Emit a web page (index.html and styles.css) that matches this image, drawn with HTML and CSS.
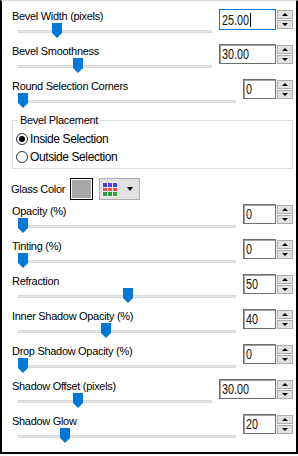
FILE: index.html
```html
<!DOCTYPE html>
<html lang="en">
<head>
    <meta charset="UTF-8">
    <meta name="viewport" content="width=device-width, initial-scale=1.0">
    <title>Glass Settings</title>
    <link rel="stylesheet" href="styles.css">
</head>
<body>
    <div class="panel">
        <div class="row">
            <div class="label">Bevel Width (pixels)</div>
            <div class="slider"><div class="track"></div><div class="thumb" style="left: 34px"></div></div>
            <div class="spin">
                <div class="box wide focused"><span class="num">25.00</span><span class="caret"></span></div>
                <div class="arrows"><div class="btn up"></div><div class="btn down"></div></div>
            </div>
        </div>
        <div class="row">
            <div class="label">Bevel Smoothness</div>
            <div class="slider"><div class="track"></div><div class="thumb" style="left: 55px"></div></div>
            <div class="spin">
                <div class="box wide"><span class="num">30.00</span></div>
                <div class="arrows"><div class="btn up"></div><div class="btn down"></div></div>
            </div>
        </div>
        <div class="row">
            <div class="label">Round Selection Corners</div>
            <div class="slider"><div class="track"></div><div class="thumb" style="left: 0px"></div></div>
            <div class="spin">
                <div class="box"><span class="num">0</span></div>
                <div class="arrows"><div class="btn up"></div><div class="btn down"></div></div>
            </div>
        </div>

        <fieldset class="group">
            <legend>Bevel Placement</legend>
            <div class="option"><span class="radio checked"></span>Inside Selection</div>
            <div class="option"><span class="radio"></span>Outside Selection</div>
        </fieldset>

        <div class="color-row">
            <span class="color-label">Glass Color</span>
            <span class="swatch"><span class="swatch-fill"></span></span>
            <span class="picker">
                <svg width="16" height="15" viewBox="0 0 16 15">
                    <rect x="0" y="0" width="16" height="15" fill="#f4f4f4"/>
                    <rect x="1" y="1" width="4" height="4" fill="#3b3bf0"/>
                    <rect x="6" y="1" width="4" height="4" fill="#5a3ee8"/>
                    <rect x="11" y="1" width="4" height="4" fill="#3b3bf0"/>
                    <rect x="1" y="6" width="4" height="3" fill="#f04848"/>
                    <rect x="6" y="6" width="4" height="3" fill="#e85070"/>
                    <rect x="11" y="6" width="4" height="3" fill="#f04848"/>
                    <rect x="1" y="10" width="4" height="4" fill="#2e9e3a"/>
                    <rect x="6" y="10" width="4" height="4" fill="#2e9e3a"/>
                    <rect x="11" y="10" width="4" height="4" fill="#2e9e3a"/>
                </svg>
                <span class="drop"></span>
            </span>
        </div>

        <div class="row">
            <div class="label">Opacity (%)</div>
            <div class="slider"><div class="track"></div><div class="thumb" style="left: 0px"></div></div>
            <div class="spin">
                <div class="box"><span class="num">0</span></div>
                <div class="arrows"><div class="btn up"></div><div class="btn down"></div></div>
            </div>
        </div>
        <div class="row">
            <div class="label">Tinting (%)</div>
            <div class="slider"><div class="track"></div><div class="thumb" style="left: 0px"></div></div>
            <div class="spin">
                <div class="box"><span class="num">0</span></div>
                <div class="arrows"><div class="btn up"></div><div class="btn down"></div></div>
            </div>
        </div>
        <div class="row">
            <div class="label">Refraction</div>
            <div class="slider"><div class="track"></div><div class="thumb" style="left: 105px"></div></div>
            <div class="spin">
                <div class="box"><span class="num">50</span></div>
                <div class="arrows"><div class="btn up"></div><div class="btn down"></div></div>
            </div>
        </div>
        <div class="row">
            <div class="label">Inner Shadow Opacity (%)</div>
            <div class="slider"><div class="track"></div><div class="thumb" style="left: 83px"></div></div>
            <div class="spin">
                <div class="box"><span class="num">40</span></div>
                <div class="arrows"><div class="btn up"></div><div class="btn down"></div></div>
            </div>
        </div>
        <div class="row">
            <div class="label">Drop Shadow Opacity (%)</div>
            <div class="slider"><div class="track"></div><div class="thumb" style="left: 0px"></div></div>
            <div class="spin">
                <div class="box"><span class="num">0</span></div>
                <div class="arrows"><div class="btn up"></div><div class="btn down"></div></div>
            </div>
        </div>
        <div class="row">
            <div class="label">Shadow Offset (pixels)</div>
            <div class="slider"><div class="track"></div><div class="thumb" style="left: 55px"></div></div>
            <div class="spin">
                <div class="box wide"><span class="num">30.00</span></div>
                <div class="arrows"><div class="btn up"></div><div class="btn down"></div></div>
            </div>
        </div>
        <div class="row">
            <div class="label">Shadow Glow</div>
            <div class="slider"><div class="track"></div><div class="thumb" style="left: 42px"></div></div>
            <div class="spin">
                <div class="box"><span class="num">20</span></div>
                <div class="arrows"><div class="btn up"></div><div class="btn down"></div></div>
            </div>
        </div>
    </div>
</body>
</html>
```

FILE: styles.css
```css
/* Page */
body {
    margin: 0;
    background-color: #fff;
    font-family: "Liberation Sans", Arial, sans-serif;
    font-size: 11px;
    color: #000;
}

/* Dialog frame */
.panel {
    width: 298px;
    height: 454px;
    box-sizing: border-box;
    border-top: 1px solid #d6d6d6;
    border-left: 2px solid #000;
    border-right: 2px solid #000;
    border-bottom: 2px solid #000;
    padding: 8px 3px 0 10px;
}

/* One labelled slider with its spin box */
.row {
    display: grid;
    grid-template-columns: 1fr auto;
    grid-template-rows: 14px 21px;
    column-gap: 7px;
}

.label {
    grid-column: 1;
    grid-row: 1;
    padding-top: 1px;
    line-height: 13px;
    letter-spacing: -0.3px;
    white-space: nowrap;
}

.slider {
    grid-column: 1;
    grid-row: 2;
    position: relative;
    margin-left: 6px;
}

.track {
    margin-top: 7px;
    height: 1px;
    background-color: #e7e7e7;
    border: 1px solid #d8d8d8;
}

.thumb {
    position: absolute;
    top: 0;
    width: 10px;
    height: 15px;
    background-color: #0078d7;
    clip-path: polygon(0 0, 100% 0, 100% 66%, 50% 100%, 0 66%);
}

/* Spin box */
.spin {
    grid-column: 2;
    grid-row: 1 / 3;
    display: flex;
    gap: 1px;
    align-items: flex-start;
}

.box {
    width: 33px;
    height: 20px;
    box-sizing: border-box;
    border: 1px solid #6e6e6e;
    box-shadow: inset 1px 1px 0 #a0a0a0;
    background-color: #fff;
    padding-left: 2px;
    display: flex;
    align-items: center;
    overflow: hidden;
}

.box.wide {
    width: 57px;
}

.box.focused {
    height: 21px;
    border-color: #0078d7;
    box-shadow: none;
}

.num {
    display: inline-block;
    font-size: 15px;
    line-height: 16px;
    transform: scaleX(0.72);
    transform-origin: left center;
    color: #111;
}

.caret {
    width: 1px;
    height: 14px;
    background-color: #000;
    margin-left: -10px;
}

.arrows {
    margin-top: 1px;
    display: flex;
    flex-direction: column;
    gap: 1px;
}

.btn {
    width: 16px;
    height: 9px;
    box-sizing: border-box;
    border: 1px solid #adadad;
    background-color: #e1e1e1;
    display: flex;
    align-items: center;
    justify-content: center;
}

.btn.up::after,
.btn.down::after {
    content: "";
    width: 0;
    height: 0;
    border-left: 3px solid transparent;
    border-right: 3px solid transparent;
}

.btn.up::after {
    border-bottom: 3px solid #000;
}

.btn.down::after {
    border-top: 3px solid #000;
}

/* Bevel placement group */
.group {
    margin: 0;
    padding: 3px 0 2px 3px;
    border: 1px solid #dcdcdc;
    min-width: 0;
}

.group legend {
    margin-left: 2px;
    padding: 0 2px;
    line-height: 13px;
    letter-spacing: -0.3px;
}

.option {
    display: flex;
    align-items: center;
    height: 18px;
    font-size: 12px;
    letter-spacing: -0.4px;
}

.radio {
    width: 12px;
    height: 12px;
    box-sizing: border-box;
    border: 1px solid #333;
    border-radius: 50%;
    margin-right: 2px;
    display: flex;
    align-items: center;
    justify-content: center;
}

.radio.checked::after {
    content: "";
    width: 6px;
    height: 6px;
    border-radius: 50%;
    background-color: #000;
}

/* Glass color row */
.color-row {
    display: flex;
    align-items: center;
    margin-top: 9px;
    margin-bottom: 4px;
    height: 22px;
}

.color-label {
    margin-left: -1px;
    letter-spacing: -0.3px;
    width: 59px;
}

.swatch {
    width: 23px;
    height: 22px;
    box-sizing: border-box;
    border: 1px solid #000;
    padding: 1px;
    background-color: #fff;
    display: flex;
}

.swatch-fill {
    flex: 1;
    background-color: #a8a8a8;
}

.picker {
    margin-left: 6px;
    width: 41px;
    height: 22px;
    box-sizing: border-box;
    border: 1px solid #adadad;
    background-color: #e1e1e1;
    display: flex;
    align-items: center;
    padding-left: 2px;
}

.drop {
    margin-left: 9px;
    width: 0;
    height: 0;
    border-left: 3px solid transparent;
    border-right: 3px solid transparent;
    border-top: 4px solid #000;
}
```
